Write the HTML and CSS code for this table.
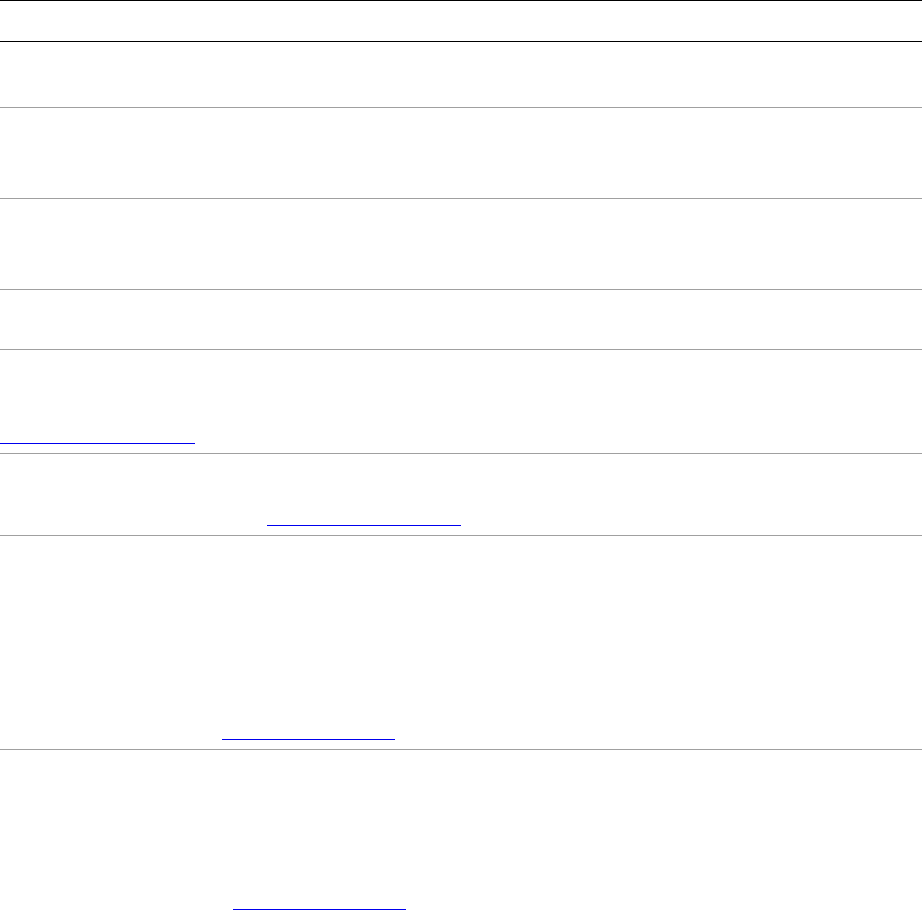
FILE: index.html
```html
<!DOCTYPE html>
<html>
<head>
<meta charset="utf-8">
<link rel="stylesheet" href="styles.css">
</head>
<body>
<div class="table">
  <div class="row head"></div>
  <div class="row r1"></div>
  <div class="row r2"></div>
  <div class="row r3"></div>
  <div class="row r4"></div>
  <div class="row r5"><a class="link l5" href="#"></a></div>
  <div class="row r6"><a class="link l6" href="#"></a></div>
  <div class="row r7"><a class="link l7" href="#"></a></div>
  <div class="row r8"><a class="link l8" href="#"></a></div>
</div>
</body>
</html>
```

FILE: styles.css
```css
html, body {
  margin: 0;
  padding: 0;
  background: #fff;
  font-family: "Liberation Sans", Arial, sans-serif;
}
.table {
  display: flex;
  flex-direction: column;
  width: 100%;
  border-top: 1px solid #000;
}
.row {
  display: flex;
  align-items: flex-end;
  box-sizing: content-box;
  border-bottom: 1px solid #a0a0a0;
  padding-bottom: 9px;
}
.head { height: 31px; border-bottom-color: #000; }
.r1 { height: 56px; }
.r2 { height: 81px; }
.r3 { height: 81px; }
.r4 { height: 50px; }
.r5 { height: 94px; }
.r6 { height: 72px; }
.r7 { height: 204px; }
.r8 { height: 160px; }
.link {
  display: block;
  height: 1px;
  background: #0000ee;
}
.l5 { width: 195px; margin-left: 0; }
.l6 { width: 194px; margin-left: 267px; }
.l7 { width: 173px; margin-left: 222px; }
.l8 { width: 173px; margin-left: 233px; }
```
